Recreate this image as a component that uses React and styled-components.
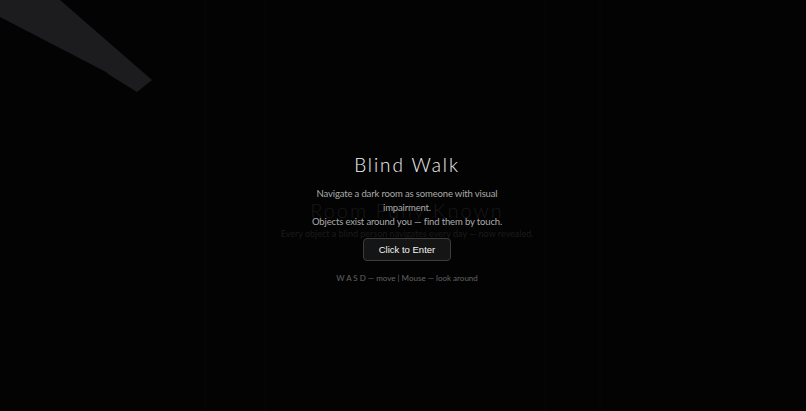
import React from "react";
import styled, { createGlobalStyle } from "styled-components";

const Global = createGlobalStyle`
  html, body { margin: 0; padding: 0; background: #030303; }
  body { font-family: "Lato", "Open Sans", sans-serif; }
  #root { width: 100vw; height: 100vh; }
`;

const Scene = styled.div`
  position: relative;
  width: 100%;
  height: 100%;
  overflow: hidden;
  background: #030303;
`;

const Backdrop = styled.svg`
  position: absolute;
  inset: 0;
  width: 100%;
  height: 100%;
`;

const Layer = styled.div`
  position: absolute;
  inset: 0;
  display: flex;
  flex-direction: column;
  align-items: center;
  justify-content: flex-start;
  padding-top: ${(p) => p.$top}px;
  padding-left: ${(p) => p.$shift || 0}px;
  box-sizing: border-box;
  text-align: center;
`;

const RevealTitle = styled.h2`
  margin: 0;
  font-family: "Lato", sans-serif;
  font-weight: 300;
  font-size: 20px;
  line-height: 26px;
  letter-spacing: 2px;
  color: #181818;
`;

const RevealLine = styled.p`
  margin: 4px 0 0;
  font-family: "Lato", sans-serif;
  font-size: 9px;
  line-height: 13px;
  color: #1b1b1b;
`;

const Title = styled.h1`
  margin: 0;
  font-family: "Lato", sans-serif;
  font-weight: 300;
  font-size: 19px;
  line-height: 26px;
  letter-spacing: 1.9px;
  color: #f4f4f4;
`;

const Lead = styled.p`
  margin: 9px 0 0;
  max-width: 198px;
  font-family: "Lato", sans-serif;
  font-size: 9.5px;
  letter-spacing: -0.15px;
  line-height: 14px;
  color: #aaaaaa;
`;

const EnterButton = styled.button`
  margin-top: 9px;
  width: 88px;
  height: 23px;
  padding: 0;
  border: 1px solid #3c3c3c;
  border-radius: 4px;
  background: #151515;
  color: #f4f4f4;
  font-family: "Liberation Sans", Arial, sans-serif;
  font-size: 9.5px;
  cursor: pointer;
`;

const Hint = styled.p`
  margin: 11px 0 0;
  font-family: "Lato", sans-serif;
  font-size: 8px;
  line-height: 12px;
  color: #636363;
`;

export default function App() {
  return (
    <>
      <Global />
      <Scene>
        <Backdrop viewBox="0 0 806 411" preserveAspectRatio="none">
          <polygon
            points="0,0 60,0 152,80 137,92 108,74 106,72 0,17"
            fill="#1c1c1f"
          />
          <g stroke="#080808" strokeWidth="1">
            <line x1="205" y1="0" x2="205" y2="411" />
            <line x1="265" y1="0" x2="265" y2="411" />
            <line x1="545" y1="0" x2="545" y2="411" />
            <line x1="600" y1="0" x2="600" y2="411" />
          </g>
        </Backdrop>
        <Layer $top={197} $shift={8}>
          <RevealTitle>Room Fully Known</RevealTitle>
          <RevealLine>
            Every object a blind person navigates every day — now revealed.
          </RevealLine>
        </Layer>
        <Layer $top={152} $shift={8}>
          <Title>Blind Walk</Title>
          <Lead>
            Navigate a dark room as someone with visual impairment.
            <br />
            Objects exist around you — find them by touch.
          </Lead>
          <EnterButton>Click to Enter</EnterButton>
          <Hint>W A S D — move | Mouse — look around</Hint>
        </Layer>
      </Scene>
    </>
  );
}
